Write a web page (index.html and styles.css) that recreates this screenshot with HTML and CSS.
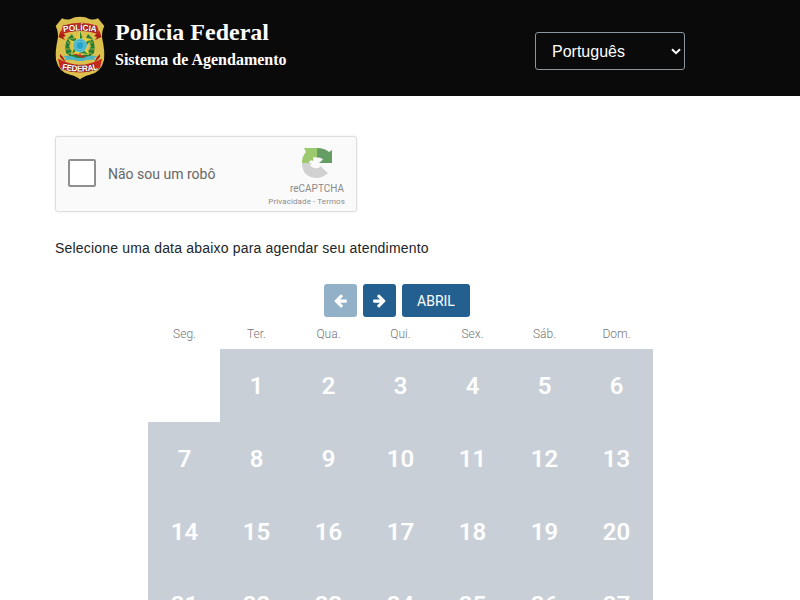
FILE: index.html
```
<!DOCTYPE html>
<html lang="pt-BR">
<head>
<meta charset="utf-8">
<title>Polícia Federal - Sistema de Agendamento</title>
<link rel="stylesheet" href="styles.css">
</head>
<body>
<header class="topbar">
  <div class="brand">
    <svg class="crest" viewBox="0 0 50 64" width="50" height="64">
      <path d="M25 .8Q30.500 .8 35 3.200Q39 4.200 43 2.200L49.300 10Q46 17 47.500 24Q50 35 49 44Q46 57 34 59Q28 60.500 25 63.500Q22 60.500 16 59Q4 57 1 44Q0 35 2.500 24Q4 17 .7 10L7 2.200Q11 4.200 15 3.200Q19.500 .8 25 .8Z" fill="#dcc04e"/>
      <path d="M5.500 15L11 20L8 21L10 24L3.500 21ZM44.500 15L39 20L42 21L40 24L46.500 21ZM5 41L11 47L8 41L5 38ZM45 41L39 47L42 41L45 38Z" fill="#a51d16"/>
      <path d="M8 9.500Q25 4 42 9.500L45 19Q25 11 5 19Z" fill="#c5281e"/>
      <path d="M3 43Q4 42.500 6 44Q25 53.500 44 44Q46 42.500 47 43L45 52Q25 61 5 52Z" fill="#c5281e"/>
      <path d="M17 18Q8 25 11 37Q17 43 25 44Q33 43 39 37Q42 25 33 18L31 22L36 30L32 38L25 40L18 38L14 30L19 22Z" fill="#247e35"/>
      <path d="M12 26L18 29M11 33L18 33M13 38L20 35M38 26L32 29M39 33L32 33M37 38L30 35" stroke="#dcc04e" stroke-width=".7"/>
      <path d="M25 14.500L28.500 21.500L37 23L32 30L34 39L25 37L16 39L18 30L13 23L21.500 21.500Z" fill="#e6cc3d"/>
      <path d="M25 15L27.500 21.500L25 24ZM36 23.500L32 29L29 27ZM17 38L19 32L22 34ZM33 38L25 37L28 34ZM14 23.500L21 22L21 26Z" fill="#278638"/>
      <path d="M25 37V41M22 39L28 42M19 38L31 41" stroke="#c5281e"/>
      <circle cx="25" cy="29.500" r="7" fill="#63c8d8"/>
      <circle cx="25" cy="29.500" r="5.200" fill="none" stroke="#2c8ca4" stroke-width=".6"/>
      <circle cx="25" cy="29.500" r="3.500" fill="#25a3cb"/>
      <path d="M8 40Q17 39 22 42L28 42Q33 39 42 40L39 42.500L41 44Q33 43 28 45H22Q17 43 9 44L11 42Z" fill="#4eb3c0"/>
      <path id="top-ribbon" d="M7 16.500Q25 12.500 43 16.500" fill="none"/>
      <path id="bottom-ribbon" d="M4 52.500Q25 58.500 46 52.500" fill="none"/>
      <text class="crest-text"><textPath href="#top-ribbon" startOffset="50%" textLength="33">POLÍCIA</textPath></text>
      <text class="crest-text"><textPath href="#bottom-ribbon" startOffset="50%" textLength="37">FEDERAL</textPath></text>
    </svg>
    <div class="titles">
      <h1>Polícia Federal</h1>
      <h2>Sistema de Agendamento</h2>
    </div>
  </div>
  <div class="language">
    <span>Português</span>
    <svg viewBox="0 0 10 7" width="10" height="7"><path d="M1 1.200L5 5.200L9 1.200" fill="none" stroke="#fff" stroke-width="2"/></svg>
  </div>
</header>
<main>
  <section class="captcha">
    <span class="checkbox"></span>
    <span class="captcha-label">Não sou um robô</span>
    <div class="captcha-brand">
      <svg viewBox="0 0 32 32" width="32" height="32">
        <path d="M1 16Q1 9 5 5L3 1H16V11Q13.500 9 12 11Q13 13 12 14Q9 12 8 16Z" fill="#9cc86e"/>
        <path d="M16 1Q23.500 1 28 5L31 3V16H18L22 12.500Q20 10 16 10.500Z" fill="#659d65"/>
        <path d="M1 16H11L9 18Q12 22 17 21Q20 20 19 19L17 17L27 26Q22 31 15.500 31Q1 30 1 16Z" fill="#d1d1d1"/>
      </svg>
      <span class="captcha-name">reCAPTCHA</span>
      <span class="captcha-links">Privacidade - Termos</span>
    </div>
  </section>
  <p class="instruction">Selecione uma data abaixo para agendar seu atendimento</p>
  <section class="calendar">
    <nav class="months">
      <button class="btn btn-icon btn-disabled" aria-label="Mês anterior"><svg viewBox="0 0 1792 1792" width="15" height="15"><path fill="#fff" d="M1664 896v128q0 53-32.500 90.500t-84.500 37.500h-704l293 294q38 36 38 90t-38 90l-75 76q-37 37-90 37-52 0-91-37l-651-652q-37-37-37-90 0-52 37-91l651-650q38-38 91-38 52 0 90 38l75 74q38 38 38 91t-38 91l-293 293h704q52 0 84.500 37.500t32.500 90.500z"/></svg></button>
      <button class="btn btn-icon" aria-label="Próximo mês"><svg class="flip" viewBox="0 0 1792 1792" width="15" height="15"><path fill="#fff" d="M1664 896v128q0 53-32.500 90.500t-84.500 37.500h-704l293 294q38 36 38 90t-38 90l-75 76q-37 37-90 37-52 0-91-37l-651-652q-37-37-37-90 0-52 37-91l651-650q38-38 91-38 52 0 90 38l75 74q38 38 38 91t-38 91l-293 293h704q52 0 84.500 37.500t32.500 90.500z"/></svg></button>
      <button class="btn btn-month">ABRIL</button>
    </nav>
    <div class="week weekdays"><span>Seg.</span><span>Ter.</span><span>Qua.</span><span>Qui.</span><span>Sex.</span><span>Sáb.</span><span>Dom.</span></div>
    <div class="week days">
      <span class="empty"></span><span>1</span><span>2</span><span>3</span><span>4</span><span>5</span><span>6</span>
      <span>7</span><span>8</span><span>9</span><span>10</span><span>11</span><span>12</span><span>13</span>
      <span>14</span><span>15</span><span>16</span><span>17</span><span>18</span><span>19</span><span>20</span>
      <span>21</span><span>22</span><span>23</span><span>24</span><span>25</span><span>26</span><span>27</span>
    </div>
  </section>
</main>
</body>
</html>
```
FILE: styles.css
```
* { box-sizing: border-box; }
body { margin: 0; height: 600px; overflow: hidden; background: #fff; font-family: "Liberation Sans", Arial, sans-serif; }
svg { display: block; flex: none; }
.topbar { display: flex; justify-content: space-between; height: 96px; padding: 16px 115px 0 55px; background: #0a0a0a; color: #fff; }
.brand { display: flex; gap: 10px; }
.crest-text { font: bold 8.5px "Liberation Sans", Arial, sans-serif; fill: #fff; stroke: #55120f; stroke-width: .7px; paint-order: stroke; text-anchor: middle; }
.titles { font-family: "Liberation Serif", "Times New Roman", serif; white-space: nowrap; }
h1 { margin: 2px 0 0; font-size: 24px; line-height: 28px; }
h2 { margin: 4px 0 0; font-size: 16px; line-height: 20px; }
.language { display: flex; align-items: center; justify-content: space-between; width: 150px; height: 38px; margin-top: 16px; padding: 0 3px 0 16px; border: 1px solid #8a96a0; border-radius: 3px; font-size: 16px; }
.language span { padding-top: 1px; }
main { padding: 40px 55px 0; }
.captcha { display: flex; align-items: center; width: 302px; height: 76px; padding: 0 11px 0 12px; background: #fafafa; border: 1px solid #dedede; border-radius: 3px; box-shadow: 0 0 3px rgba(0,0,0,.08); font-family: Roboto, sans-serif; color: #555; }
.checkbox { width: 28px; height: 28px; margin-top: -2px; border: 2px solid #8f8f8f; border-radius: 2px; background: #fff; }
.captcha-label { margin-left: 12px; font-size: 14px; line-height: 17px; color: #666; }
.captcha-brand { display: flex; flex-direction: column; align-items: flex-end; margin-left: auto; padding-top: 6px; color: #8a8a8a; }
.captcha-brand svg { margin-right: 12px; }
.captcha-name { margin: 4px 1px 0 0; font-size: 10px; line-height: 12px; }
.captcha-links { margin-top: 2px; font-size: 8px; line-height: 10px; letter-spacing: .1px; }
.instruction { margin: 27px 0 26px; font-size: 14px; line-height: 19px; letter-spacing: .19px; color: #212529; }
.calendar { width: 505px; margin-left: 93px; font-family: Roboto, sans-serif; }
.months { display: flex; justify-content: center; gap: 6px; padding-right: 7px; }
.btn { display: flex; align-items: center; justify-content: center; height: 33px; padding: 0; border: 0; border-radius: 3px; background: #24608f; color: #fff; font: 14px Roboto, sans-serif; }
.btn-icon { width: 33px; }
.btn-disabled { background: #92b0c7; }
.btn-month { width: 68px; }
.flip { transform: scaleX(-1); }
.week { display: grid; grid-template-columns: repeat(6, 72px) 73px; }
.week span { padding-left: 1px; }
.week span:nth-child(7n) { padding-left: 0; }
.weekdays { height: 32px; font-size: 12px; line-height: 35px; font-weight: 300; color: #777; text-align: center; }
.days { height: 251px; overflow: hidden; grid-auto-rows: 73px; font-size: 24px; font-weight: 500; line-height: 74px; text-align: center; color: #fff; -webkit-text-stroke: .2px #fff; }
.days span { background: #c8cfd7; }
.days .empty { background: transparent; }
```
